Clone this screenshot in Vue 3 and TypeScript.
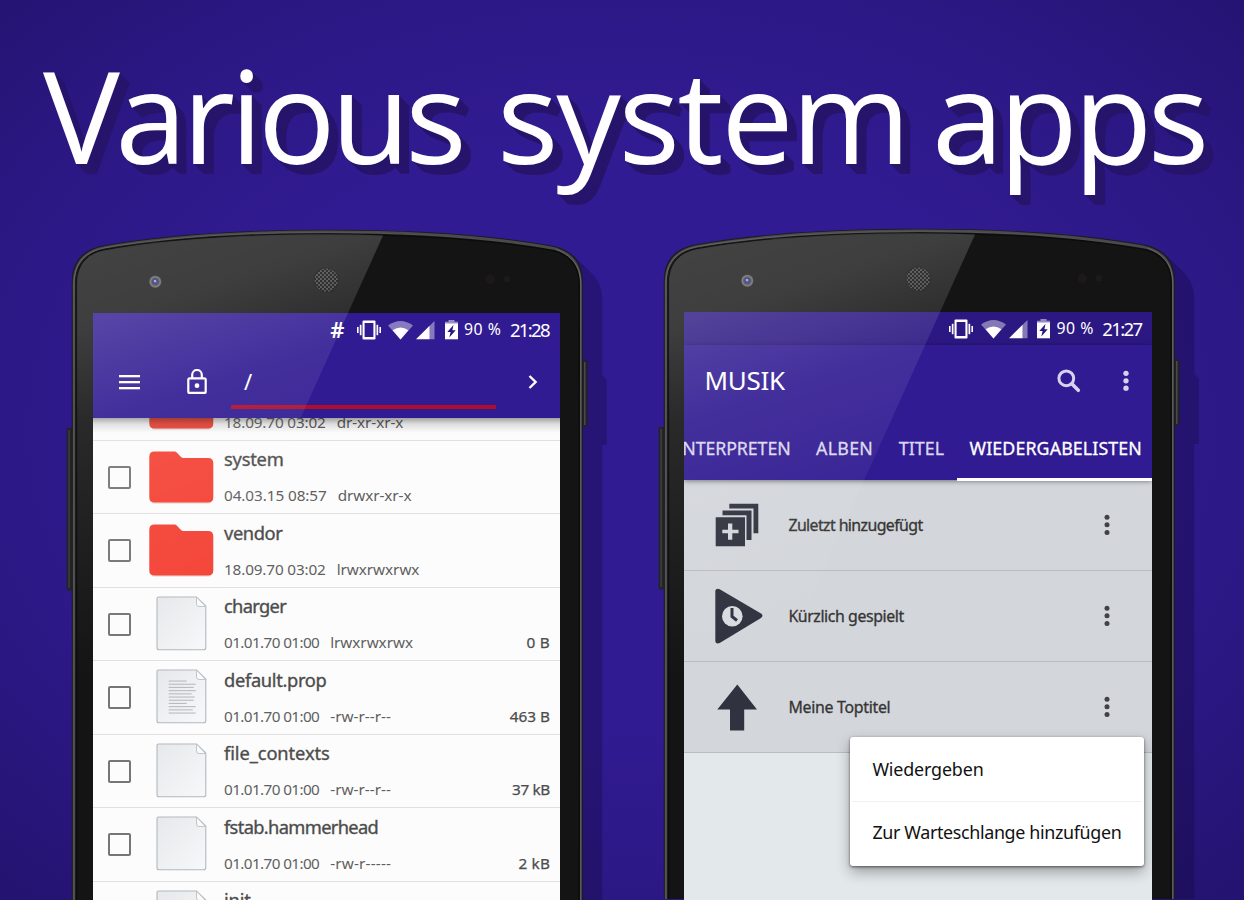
<script setup lang="ts">
import type { Directive } from 'vue'

interface FileRow {
  name: string
  nameW: number
  date: string
  dateW: number
  perm: string
  permW: number
  size?: string
  sizeW?: number
  kind: 'folder' | 'file' | 'text'
}

const files: FileRow[] = [
  { name: '', nameW: 0, date: '18.09.70 03:02', dateW: 101, perm: 'dr-xr-xr-x', permW: 66, kind: 'folder' },
  { name: 'system', nameW: 59, date: '04.03.15 08:57', dateW: 102, perm: 'drwxr-xr-x', permW: 73, kind: 'folder' },
  { name: 'vendor', nameW: 58, date: '18.09.70 03:02', dateW: 101, perm: 'lrwxrwxrwx', permW: 82, kind: 'folder' },
  { name: 'charger', nameW: 62, date: '01.01.70 01:00', dateW: 95, perm: 'lrwxrwxrwx', permW: 82, size: '0 B', sizeW: 22.5, kind: 'file' },
  { name: 'default.prop', nameW: 102, date: '01.01.70 01:00', dateW: 95, perm: '-rw-r--r--', permW: 60, size: '463 B', sizeW: 39.5, kind: 'text' },
  { name: 'file_contexts', nameW: 105, date: '01.01.70 01:00', dateW: 95, perm: '-rw-r--r--', permW: 60, size: '37 kB', sizeW: 37.5, kind: 'file' },
  { name: 'fstab.hammerhead', nameW: 154, date: '01.01.70 01:00', dateW: 95, perm: '-rw-r-----', permW: 60, size: '2 kB', sizeW: 30.5, kind: 'file' },
  { name: 'init', nameW: 26, date: '', dateW: 0, perm: '', permW: 0, kind: 'file' },
]

const headline = [
  { word: 'Various', w: 423 },
  { word: 'system', w: 413 },
  { word: 'apps', w: 276.5 },
]

const playlists = [
  { label: 'Zuletzt hinzugefügt', w: 134, icon: 'added' },
  { label: 'Kürzlich gespielt', w: 115, icon: 'recent' },
  { label: 'Meine Toptitel', w: 101.5, icon: 'top' },
]

const tabs = [
  { label: 'INTERPRETEN', w: 113.5, active: false },
  { label: 'ALBEN', w: 56, active: false },
  { label: 'TITEL', w: 44.5, active: false },
  { label: 'WIEDERGABELISTEN', w: 171.5, active: true },
]

const phones = [
  { id: 'explorer', time: '21:28', root: true },
  { id: 'music', time: '21:27', root: false },
]

const textLines = [18, 27, 25, 27, 23, 26, 25, 18, 27, 24, 27]

const outline =
  'M71.8 910V282C71.8 262 82 249.500 103 245.500C170 233.500 250 229.800 327.300 229.800S484 233.500 551.500 245.500C572.600 249.500 582.800 262 582.800 282V910Z'
const glass =
  'M76.800 910V284C76.800 266 86 253.800 104 250.200C172 238 250 234.300 327.300 234.300S482 238 550.500 250.200C569 253.800 579.200 266 579.200 284V910Z'

// Tracks a label out (or in) so it fills the given width.
const vFit: Directive<HTMLElement, number> = {
  mounted(el, { value }) {
    const length = (el.textContent ?? '').trim().length
    if (length < 2) return
    const natural = el.getBoundingClientRect().width
    el.style.letterSpacing = `${((value + 0.8 - natural) / (length - 1)).toFixed(3)}px`
  },
}
</script>

<template>
  <main class="stage">
    <h1 class="headline">
      <span v-for="part in headline" :key="part.word" v-fit="part.w" class="fit">{{ part.word }}</span>
    </h1>

    <div class="phones">
      <section v-for="phone in phones" :key="phone.id" class="phone" :class="phone.id">
        <svg class="body" viewBox="60 225 560 675" width="560" height="675">
          <defs>
            <linearGradient :id="'rim-' + phone.id" x1="0" x2="0" y1="229" y2="420" gradientUnits="userSpaceOnUse">
              <stop offset="0" stop-color="#4b4b4d" />
              <stop offset="1" stop-color="#3a3a3c" />
            </linearGradient>
            <linearGradient :id="'edge-' + phone.id" x1="74" x2="556" y1="0" y2="0" gradientUnits="userSpaceOnUse">
              <stop offset="0" stop-color="#626265" />
              <stop offset=".4" stop-color="#58585a" />
              <stop offset="1" stop-color="#4a4a4c" />
            </linearGradient>
            <pattern :id="'mesh-' + phone.id" width="4" height="4" patternUnits="userSpaceOnUse">
              <rect width="4" height="4" fill="#4a4a4a" />
              <circle cx="1" cy="1" r="1.300" fill="#0b0b0b" />
              <circle cx="3" cy="3" r="1.300" fill="#0b0b0b" />
            </pattern>
            <radialGradient :id="'lens-' + phone.id">
              <stop offset="0" stop-color="#4a4ac8" />
              <stop offset=".42" stop-color="#26266e" />
              <stop offset=".52" stop-color="#3c3c40" />
              <stop offset=".8" stop-color="#6a6a6a" />
              <stop offset="1" stop-color="#2a2a2a" />
            </radialGradient>
          </defs>
          <g opacity=".25" fill="#0a0524">
            <g v-for="n in 19" :key="n" :transform="`translate(${n * 1.025} ${n})`">
              <path :d="outline" />
              <rect x="575" y="360" width="12.300" height="66" />
            </g>
          </g>
          <rect x="578" y="360.500" width="9.500" height="66" rx="1" fill="#222" />
          <rect x="584" y="362" width="1.500" height="63" fill="#4a4a4a" />
          <rect x="66.700" y="428" width="8" height="162.500" rx="1" fill="#242424" />
          <rect x="68.500" y="430" width="1.200" height="158" fill="#454545" />
          <path :d="outline" fill="#1c1c1c" />
          <path :d="outline" fill="none" :stroke="`url(#rim-${phone.id})`" stroke-width="2" transform="translate(2.500 2) scale(.9923 .999)" />
          <path :d="glass" fill="#141414" stroke="#0b0b0b" stroke-width="1.200" />
          <path d="M580.800 910V284C580.800 267 572 255 556 249.500" fill="none" stroke="#6a6a6c" stroke-width="1" />
          <path
            d="M74 910V284C74 265 84 252 104 248C172 236 250 232.300 327 232.300S482 236 556 249.500"
            fill="none"
            :stroke="`url(#edge-${phone.id})`"
            stroke-width="1.200"
          />
          <circle cx="155.300" cy="281.700" r="6.300" :fill="`url(#lens-${phone.id})`" />
          <circle cx="155" cy="281" r="1.100" fill="#aab4ff" />
          <circle cx="326.300" cy="280" r="13" fill="#101010" />
          <circle cx="326.300" cy="280" r="11.600" :fill="`url(#mesh-${phone.id})`" />
          <circle cx="490.300" cy="279.300" r="4.800" fill="#1d1919" />
          <circle cx="507" cy="279.300" r="3.200" fill="#1e1a1a" />
        </svg>

        <div class="screen">
          <div class="status">
            <span v-if="phone.root" class="hash">#</span>
            <svg class="vibrate" width="24" height="20" viewBox="0 0 24 20" fill="#fff">
              <path fill-rule="evenodd" d="M6.500 .5h11q1 0 1 1v17q0 1-1 1h-11q-1 0-1-1v-17q0-1 1-1zm1.100 2.500v14h8.800v-14z" />
              <rect x="2.800" y="4.800" width="1.700" height="10.400" /><rect x="0" y="7" width="1.600" height="6" />
              <rect x="19.500" y="4.800" width="1.700" height="10.400" /><rect x="22.400" y="7" width="1.600" height="6" />
            </svg>
            <svg class="wifi" width="25" height="20" viewBox="0 0 25 20" fill="#fff">
              <path opacity=".42" d="M0 5.500Q12.500 -3.500 25 5.500L12.500 19.500z" />
              <path d="M4.600 10.300Q12.500 4.600 20.400 10.300L12.500 19.500z" />
            </svg>
            <svg class="signal" width="19" height="20" viewBox="0 0 19 20" fill="#fff">
              <path opacity=".42" d="M13.600 5.700L18.500 1v18.300h-4.900z" />
              <path d="M0 19.300L13.600 5.700v13.600z" />
            </svg>
            <svg class="battery" width="13" height="20" viewBox="0 0 13 20">
              <path fill="#fff" opacity=".5" d="M3.500 0h6v1.800h3.500v2h-13v-2h3.500z" />
              <path fill="#fff" d="M0 3.400h13v15.900h-13z" />
              <path fill="#2a1680" d="M8.500 5L2.300 12h3.300L4.300 17.500L10.700 10.300H7.400z" />
            </svg>
            <span v-fit="36" class="fit percent">90 %</span>
            <span v-fit="40" class="fit clock">{{ phone.time }}</span>
          </div>

          <template v-if="phone.root">
            <div class="pathbar">
              <svg class="menu" width="21" height="15" viewBox="0 0 21 15" fill="#fff">
                <rect width="21" height="2.300" /><rect y="6" width="21" height="2.300" /><rect y="12" width="21" height="2.300" />
              </svg>
              <svg class="lock" width="20" height="26" viewBox="0 0 20 26" fill="none" stroke="#fff" stroke-width="2.200">
                <rect x="1.300" y="9.300" width="17.400" height="14.600" rx="1.500" />
                <path d="M5.200 9.300V5.800a4.800 4.800 0 0 1 9.600 0v3.500" />
                <circle cx="10" cy="16.700" r="2.400" fill="#fff" stroke="none" />
              </svg>
              <div class="path">/</div>
              <svg class="go" width="10" height="14" viewBox="0 0 10 14" fill="none" stroke="#fff" stroke-width="2.400">
                <path d="M1.500 1L7.600 7L1.500 13" />
              </svg>
            </div>
            <div class="files">
              <ul class="filelist">
                <li v-for="(file, index) in files" :key="index" class="file">
                  <i class="check"></i>
                  <svg v-if="file.kind === 'folder'" class="ficon" width="68" height="72" viewBox="0 0 68 72">
                    <path fill="#e3c8c6" opacity=".6" d="M4 55h59v6.500q-1 1.200-3 1.200H6q-2 0-2-1.200z" />
                    <path fill="#f44336" d="M6.500 10.500H26.500Q27.800 10.500 29 11.700L33 16Q34 17 35.500 17H60Q65.300 17 65.300 22.300V56.300Q65.300 61.600 60 61.600H6.500Q1.300 61.600 1.300 56.300V15.700Q1.300 10.500 6.500 10.500z" />
                  </svg>
                  <svg v-else class="ficon" width="68" height="72" viewBox="0 0 68 72">
                    <defs>
                      <linearGradient :id="'sheet-' + index" x1="0" y1="0" x2="1" y2="1">
                        <stop offset="0" stop-color="#e6e8eb" />
                        <stop offset="1" stop-color="#f7f8f9" />
                      </linearGradient>
                    </defs>
                    <path :fill="`url(#sheet-${index})`" stroke="#b3b8bd" stroke-width="1.100" d="M10.500 9H48.500L57.800 18V59.500Q57.800 61.800 55.500 61.800H11Q9 61.800 9 59.800V10.500Q9 9 10.500 9z" />
                    <path fill="#f9fafb" stroke="#bcc1c6" stroke-width=".9" d="M48.500 9V16Q48.500 18.500 51 18.500H57.600z" />
                    <g v-if="file.kind === 'text'" fill="#b9bcbf">
                      <rect v-for="(w, i) in textLines" :key="i" x="20.700" :y="19.500 + i * 3.200" :width="w" height="1.100" />
                    </g>
                  </svg>
                  <div class="info">
                    <span v-fit="file.nameW" class="fit name">{{ file.name }}</span>
                    <div class="meta">
                      <span v-fit="file.dateW" class="fit">{{ file.date }}</span>
                      <span v-fit="file.permW" class="fit perm">{{ file.perm }}</span>
                      <span v-if="file.size" v-fit="file.sizeW ?? 30" class="fit size">{{ file.size }}</span>
                    </div>
                  </div>
                </li>
              </ul>
            </div>
          </template>

          <template v-else>
            <header class="music-head">
              <div class="appbar">
                <span v-fit="80" class="fit apptitle">MUSIK</span>
                <svg class="search" width="24" height="24" viewBox="0 0 24 24" fill="none" stroke="#d8d2ee">
                  <circle cx="9.300" cy="9.300" r="7.400" stroke-width="3" />
                  <path d="M14.800 14.800L21.300 21.300" stroke-width="3.600" stroke-linecap="round" />
                </svg>
                <svg class="dots" width="6" height="22" viewBox="0 0 6 22" fill="#d8d2ee">
                  <circle cx="3" cy="3.300" r="2.650" /><circle cx="3" cy="10.800" r="2.650" /><circle cx="3" cy="18.200" r="2.650" />
                </svg>
              </div>
              <nav class="tabs">
                <span v-for="tab in tabs" :key="tab.label" class="tab" :class="{ active: tab.active }">
                  <span v-fit="tab.w" class="fit">{{ tab.label }}</span>
                </span>
              </nav>
            </header>
            <ul class="playlists">
              <li v-for="list in playlists" :key="list.label" class="playlist">
                <svg class="picon" width="50" height="60" viewBox="0 0 50 60" fill="#30333f">
                  <template v-if="list.icon === 'added'">
                    <path d="M14.300 8.700H43.300V38.300H38.500V13.500H14.300z" />
                    <path d="M7.500 15.500H36.500V45H31.500V20.300H7.500z" />
                    <path fill-rule="evenodd" d="M.7 22.200H30V51.300H.7zM13 28.500V34.800H7.300V38.300H13V44.700H17.300V38.300H23.500V34.800H17.300V28.500z" />
                  </template>
                  <template v-else-if="list.icon === 'recent'">
                    <path d="M4.700 3.200L46 27.600Q49 29.800 46 32L4.700 57Q.4 58.500 .3 54.500V5.600Q.5 1.800 4.700 3.200z" />
                    <circle cx="17.300" cy="30.300" r="10.300" fill="#d9dce0" />
                    <path d="M17 22V30.500L22 34.500" fill="none" stroke="#30333f" stroke-width="3" />
                  </template>
                  <path v-else d="M22.300 7.500L42 32.400H29.200V53.500H15V32.400H2.300z" />
                </svg>
                <span v-fit="list.w" class="fit plabel">{{ list.label }}</span>
                <svg class="dots" width="6" height="22" viewBox="0 0 6 22" fill="#424245">
                  <circle cx="3" cy="3.200" r="2.500" /><circle cx="3" cy="10.800" r="2.500" /><circle cx="3" cy="18.400" r="2.500" />
                </svg>
              </li>
            </ul>
            <div class="popup">
              <div class="option"><span v-fit="110.500" class="fit">Wiedergeben</span></div>
              <div class="option"><span v-fit="248.500" class="fit">Zur Warteschlange hinzufügen</span></div>
            </div>
          </template>
        </div>

        <svg class="glare" viewBox="60 225 560 675" width="560" height="675">
          <defs>
            <linearGradient :id="'glare-' + phone.id" x1="80" y1="240" x2="210" y2="640" gradientUnits="userSpaceOnUse">
              <stop offset="0" stop-color="#fff" stop-opacity=".2" />
              <stop offset=".2" stop-color="#fff" stop-opacity=".18" />
              <stop offset=".42" stop-color="#fff" stop-opacity=".09" />
              <stop offset="1" stop-color="#fff" stop-opacity="0" />
            </linearGradient>
          </defs>
          <path
            :fill="`url(#glare-${phone.id})`"
            d="M76.800 900V284C76.800 266 86 253.800 104 250.200C172 238 250 234.300 327.300 234.300Q356 234.300 383 235.500L83 900z"
          />
        </svg>
      </section>
    </div>
  </main>
</template>

<style>
body {
  margin: 0;
  background: #2b1883;
}
</style>

<style scoped>
.stage {
  width: 1244px;
  height: 900px;
  overflow: hidden;
  font-family: "Noto Sans", "Open Sans", sans-serif;
  background: radial-gradient(ellipse 900px 640px at 622px 430px, #311b92 0%, #311b92 45%, #2c1885 72%, #241370 100%);
}
.fit {
  display: inline-block;
  white-space: pre;
}
.headline {
  margin: 0;
  height: 191px;
  padding: 34px 0 0 43px;
  display: grid;
  grid-template-columns: 454px 435px auto;
  justify-items: start;
  font: 400 129px/160px "Open Sans", "Noto Sans", sans-serif;
  color: #fff;
  white-space: nowrap;
  text-shadow: 1px 1px #27156c, 2px 2px #27156c, 3px 3px #27156c, 4px 4px #27156c, 5px 5px #27156c,
    6px 6px #27156c, 7px 7px #27156c, 8px 8px #27156c, 9px 9px #27156c, 10px 10px #27156c;
}
.phones {
  display: flex;
  gap: 32px;
  padding-left: 60px;
}
.phone {
  position: relative;
  flex: none;
  width: 560px;
  height: 676px;
}
.phone.music {
  margin-top: -1px;
}
.body,
.glare {
  position: absolute;
  left: 0;
  top: 0;
}
.glare {
  z-index: 2;
  pointer-events: none;
}
.screen {
  position: relative;
  margin: 88px 0 0 33px;
  width: 467px;
  height: 590px;
  overflow: hidden;
  display: flex;
  flex-direction: column;
  background: #311b92;
  color: #fff;
}
.music .screen {
  margin-left: 32.400px;
  width: 468.100px;
  background: #e3e8eb;
}
.phone::before {
  content: "";
  display: table;
}

.status {
  flex: none;
  height: 33px;
  box-sizing: border-box;
  padding-right: 11px;
  display: flex;
  align-items: center;
  justify-content: flex-end;
}
.music .status {
  background: #2c1883;
}
.hash {
  font-size: 22px;
  line-height: 33px;
  font-weight: 600;
  margin-right: 12px;
}
.wifi {
  margin-left: 7.500px;
}
.signal {
  margin-left: 3px;
}
.battery {
  margin-left: 9.500px;
}
.percent {
  margin-left: 6.500px;
  font-size: 15.800px;
  line-height: 33px;
}
.clock {
  margin-left: 8.500px;
  font-size: 18.600px;
  line-height: 33px;
}

.pathbar {
  flex: none;
  height: 72px;
  display: flex;
  align-items: center;
  padding-left: 26px;
}
.menu {
  margin-top: 1px;
}
.lock {
  margin: -1px 0 0 47px;
}
.path {
  align-self: stretch;
  width: 265px;
  margin: 0 0 9px 24px;
  padding: 12px 0 0 13px;
  box-sizing: border-box;
  border-bottom: 4px solid #b00d2b;
  font-size: 22px;
  line-height: 47px;
  height: 63px;
}
.go {
  margin: 0 0 0 32px;
}

.files {
  position: relative;
  flex: 1;
  overflow: hidden;
  background: #fcfcfc;
}
.files::after {
  content: "";
  position: absolute;
  inset: 0 0 auto 0;
  height: 15px;
  background: linear-gradient(rgba(0, 0, 0, 0.36), rgba(0, 0, 0, 0.12) 40%, rgba(0, 0, 0, 0));
}
.filelist {
  list-style: none;
  margin: -51px 0 0;
  padding: 0;
}
.file {
  height: 73.500px;
  box-sizing: border-box;
  border-bottom: 1.500px solid #e0e0e0;
  display: flex;
  align-items: flex-start;
}
.check {
  flex: none;
  width: 23px;
  height: 23px;
  box-sizing: border-box;
  margin: 25.300px 0 0 15px;
  border: 2px solid #767676;
  border-radius: 2px;
}
.ficon {
  flex: none;
  margin-left: 17px;
}
.info {
  flex: 1;
  display: flex;
  flex-direction: column;
  align-items: flex-start;
  gap: 14.200px;
  padding: 6.800px 10px 0 8px;
}
.name {
  min-height: 24px;
  font-size: 18.300px;
  line-height: 24px;
  color: #4c4c4c;
  -webkit-text-stroke: 0.350px #4c4c4c;
}
.meta {
  align-self: stretch;
  display: flex;
  font-size: 15.300px;
  line-height: 20px;
  color: #5f5f5f;
}
.perm {
  margin-left: 11px;
}
.size {
  margin-left: auto;
  color: #4c4c4c;
  -webkit-text-stroke: 0.250px #4c4c4c;
}

.music-head {
  position: relative;
  z-index: 1;
  flex: none;
  height: 135px;
  background: #311b92;
  box-shadow: 0 1px 5px rgba(0, 0, 0, 0.5);
}
.appbar {
  height: 72px;
  display: flex;
  align-items: center;
  padding: 0 23px 0 20px;
}
.apptitle {
  font-size: 26px;
  line-height: 70px;
  margin-top: -2px;
  font-weight: 400;
}
.search {
  margin-left: auto;
}
.appbar .dots {
  margin-left: 42px;
}
.tabs {
  display: flex;
  height: 63px;
  margin-left: -8px;
}
.tab {
  flex: none;
  position: relative;
  box-sizing: border-box;
  height: 63.500px;
  margin-right: 25.500px;
  font-size: 17.800px;
  line-height: 62px;
  color: #dcd7ef;
  -webkit-text-stroke: 0.300px currentColor;
}
.tab.active {
  margin: 0;
  padding: 0 0 0 12.500px;
  width: 200px;
  color: #fff;
  border-bottom: 3px solid #fff;
  margin-left: -12.500px;
}
.playlists {
  list-style: none;
  margin: 0;
  padding: 0;
}
.playlist {
  height: 91px;
  box-sizing: border-box;
  border-bottom: 1px solid #b9bdc2;
  background: #d3d6db;
  display: flex;
  align-items: center;
  padding: 0 42.500px 0 31px;
}
.plabel {
  margin-left: 23px;
  font-size: 15.900px;
  line-height: 30px;
  color: #353535;
  -webkit-text-stroke: 0.300px #353535;
}
.playlist .dots {
  margin-left: auto;
}
.popup {
  position: absolute;
  left: 165.500px;
  top: 424.500px;
  width: 294px;
  height: 129px;
  border-radius: 3px;
  background: #fff;
  box-shadow: 0 6px 14px rgba(0, 0, 0, 0.32), 0 1px 3px rgba(0, 0, 0, 0.55);
  color: #111;
}
.option {
  margin: 0 2px;
  padding-left: 20.500px;
  font-size: 17.900px;
  line-height: 65px;
  height: 64px;
  box-sizing: border-box;
}
.option + .option {
  border-top: 1.500px solid #f0f0f0;
  line-height: 61px;
}
</style>
